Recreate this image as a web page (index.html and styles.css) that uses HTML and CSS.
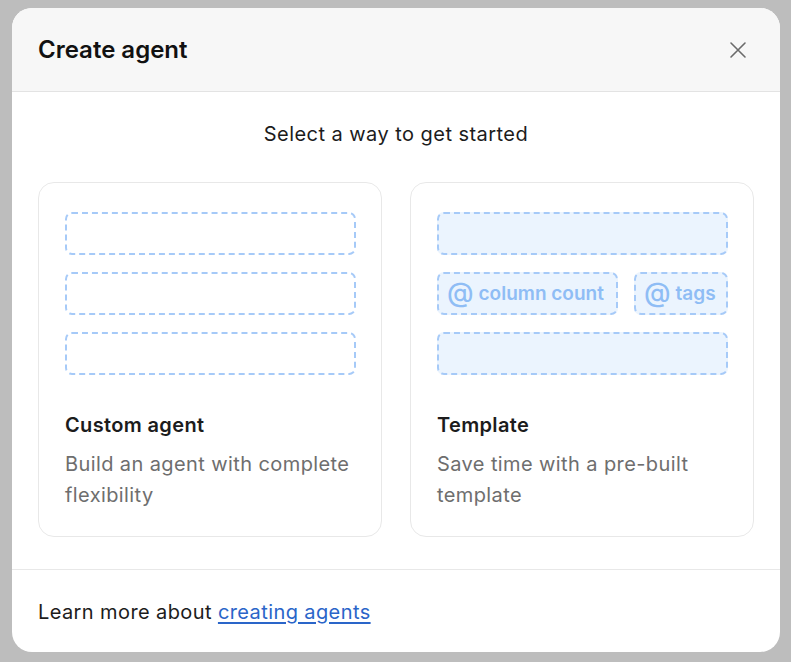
FILE: index.html
```html
<!DOCTYPE html>
<html>
<head>
<meta charset="utf-8">
<link rel="stylesheet" href="styles.css">
</head>
<body>
<div class="modal">
  <div class="header">
    <h1 class="title">Create agent</h1>
    <button class="close" aria-label="Close">
      <svg width="18" height="18" viewBox="0 0 18 18"><path d="M2 2L16 16M16 2L2 16" stroke="#6b6b6b" stroke-width="1.6" stroke-linecap="round"/></svg>
    </button>
  </div>
  <div class="body">
    <p class="subtitle">Select a way to get started</p>
    <div class="cards">
      <div class="card">
        <div class="preview">
          <div class="slot"></div>
          <div class="slot"></div>
          <div class="slot"></div>
        </div>
        <div class="card-title">Custom agent</div>
        <div class="card-desc">Build an agent with complete flexibility</div>
      </div>
      <div class="card">
        <div class="preview">
          <div class="slot filled"></div>
          <div class="slot-row">
            <div class="slot filled chip wide"><span class="at">@</span>column count</div>
            <div class="slot filled chip"><span class="at">@</span>tags</div>
          </div>
          <div class="slot filled"></div>
        </div>
        <div class="card-title">Template</div>
        <div class="card-desc">Save time with a pre-built template</div>
      </div>
    </div>
  </div>
  <div class="footer">
    Learn more about <a href="#" class="link">creating agents</a>
  </div>
</div>
</body>
</html>
```
FILE: styles.css
```css
html, body {
  margin: 0;
  padding: 0;
}
body {
  background: #bdbdbd;
  font-family: Inter, "Noto Sans", sans-serif;
  padding: 8px 11px 10px 12px;
  box-sizing: border-box;
  height: 662px;
}
.modal {
  width: 768px;
  height: 644px;
  background: #ffffff;
  border-radius: 20px;
  overflow: hidden;
  display: flex;
  flex-direction: column;
}
.header {
  height: 84px;
  background: #f7f7f7;
  border-bottom: 1px solid #e3e3e3;
  display: flex;
  align-items: center;
  justify-content: space-between;
  padding: 0 26px 0 26px;
  box-sizing: border-box;
}
.title {
  margin: 0;
  font-size: 24px;
  font-weight: 600;
  color: #111111;
}
.close {
  border: 0;
  background: transparent;
  padding: 0;
  width: 18px;
  height: 18px;
  display: flex;
  margin-right: 7px;
  margin-top: 1px;
}
.body {
  padding: 28px 26px 32px 26px;
  border-bottom: 1px solid #e8e8e8;
}
.subtitle {
  margin: 0 0 34px 0;
  text-align: center;
  font-size: 20px;
  letter-spacing: 0.45px;
  line-height: 28px;
  color: #1c1c1c;
}
.cards {
  display: grid;
  grid-template-columns: 344px 344px;
  gap: 28px;
}
.card {
  border: 1px solid #e8e8e8;
  border-radius: 16px;
  padding: 29px 25px 28px 26px;
  height: 355px;
  box-sizing: border-box;
}
.preview {
  display: flex;
  flex-direction: column;
  gap: 17px;
  margin-bottom: 36px;
}
.slot {
  height: 43px;
  box-sizing: border-box;
  border: 2px dashed #a6caf8;
  border-radius: 7px;
}
.slot.filled {
  background: #ebf4fe;
}
.slot-row {
  display: flex;
  gap: 16px;
}
.chip {
  display: flex;
  align-items: center;
  padding: 0 8px;
  font-size: 19px;
  font-weight: 600;
  color: #8fbdf5;
  white-space: nowrap;
}
.chip.wide {
  width: 181px;
}
.chip:not(.wide) {
  flex: 1;
}
.at {
  font-size: 27px;
  font-weight: 500;
  margin-right: 5px;
  position: relative;
  top: -1px;
}
.card-title {
  font-size: 20px;
  font-weight: 600;
  letter-spacing: 0.35px;
  color: #1c1c1c;
  line-height: 28px;
  margin-bottom: 10px;
}
.card-desc {
  font-size: 20px;
  letter-spacing: 0.4px;
  line-height: 31px;
  color: #6e6e6e;
}
.footer {
  flex: 1;
  display: flex;
  align-items: center;
  padding: 0 26px;
  font-size: 20px;
  letter-spacing: 0.4px;
  color: #1c1c1c;
  padding-top: 1px;
}
.link {
  color: #2a65c9;
  text-decoration: underline;
  margin-left: 6px;
  text-underline-offset: 3px;
}
```
